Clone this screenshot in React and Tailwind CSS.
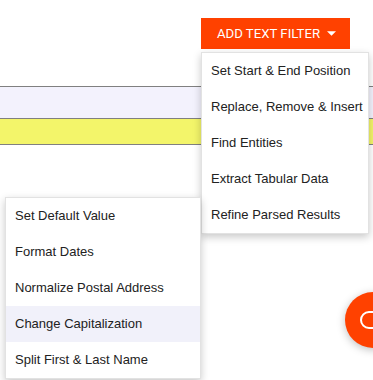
import React from 'react';

const primaryItems = [
  'Set Start & End Position',
  'Replace, Remove & Insert',
  'Find Entities',
  'Extract Tabular Data',
  'Refine Parsed Results',
];

const secondaryItems = [
  'Set Default Value',
  'Format Dates',
  'Normalize Postal Address',
  'Change Capitalization',
  'Split First & Last Name',
];

const MenuItem = ({ label, active }) => (
  <li
    className={`h-[36px] flex items-center px-[9px] text-[13px] text-[#222] whitespace-nowrap cursor-pointer ${
      active ? 'bg-[#f1f1fa]' : 'bg-white'
    }`}
  >
    {label}
  </li>
);

const App = () => {
  return (
    <div
      className="relative w-[373px] h-[380px] overflow-hidden bg-white"
      style={{ fontFamily: '"Liberation Sans", Arial, sans-serif' }}
    >
      {/* toolbar */}
      <div className="flex justify-end pt-[18px] pr-[23px]">
        <button
          className="h-[31px] w-[149px] bg-[#ff4100] text-white text-[13.2px] flex items-center justify-center gap-[7px] pl-[2px]"
          style={{ fontFamily: 'Roboto, sans-serif' }}
        >
          ADD TEXT FILTER
          <svg width="9" height="5" viewBox="0 0 10 5">
            <path d="M0 0 L10 0 L5 5 Z" fill="white" />
          </svg>
        </button>
      </div>

      {/* table rows */}
      <div className="mt-[37px]">
        <div className="h-[32px] border-t border-[#808080] bg-[#f3f2fd]" />
        <div className="h-[27px] border-t border-b border-[#808080] bg-[#f3f56a]" />
      </div>

      {/* filter menu */}
      <ul className="absolute left-[201px] top-[52px] w-[168px] bg-white border border-[#e2e2e2] shadow-[0_3px_8px_rgba(0,0,0,0.22)]">
        {primaryItems.map((item) => (
          <MenuItem key={item} label={item} />
        ))}
      </ul>

      {/* sub menu */}
      <ul className="absolute left-[5px] top-[197px] w-[196px] bg-white border border-[#e2e2e2] shadow-[0_3px_8px_rgba(0,0,0,0.22)]">
        {secondaryItems.map((item) => (
          <MenuItem key={item} label={item} active={item === 'Change Capitalization'} />
        ))}
      </ul>

      {/* help fab */}
      <div className="absolute left-[345px] top-[292px] w-[56px] h-[56px] rounded-full bg-[#ff4100] shadow-[0_2px_8px_rgba(0,0,0,0.25)] flex items-center justify-center">
        <div className="w-[26px] h-[18px] rounded-full border-2 border-white" />
      </div>
    </div>
  );
};

export default App;
